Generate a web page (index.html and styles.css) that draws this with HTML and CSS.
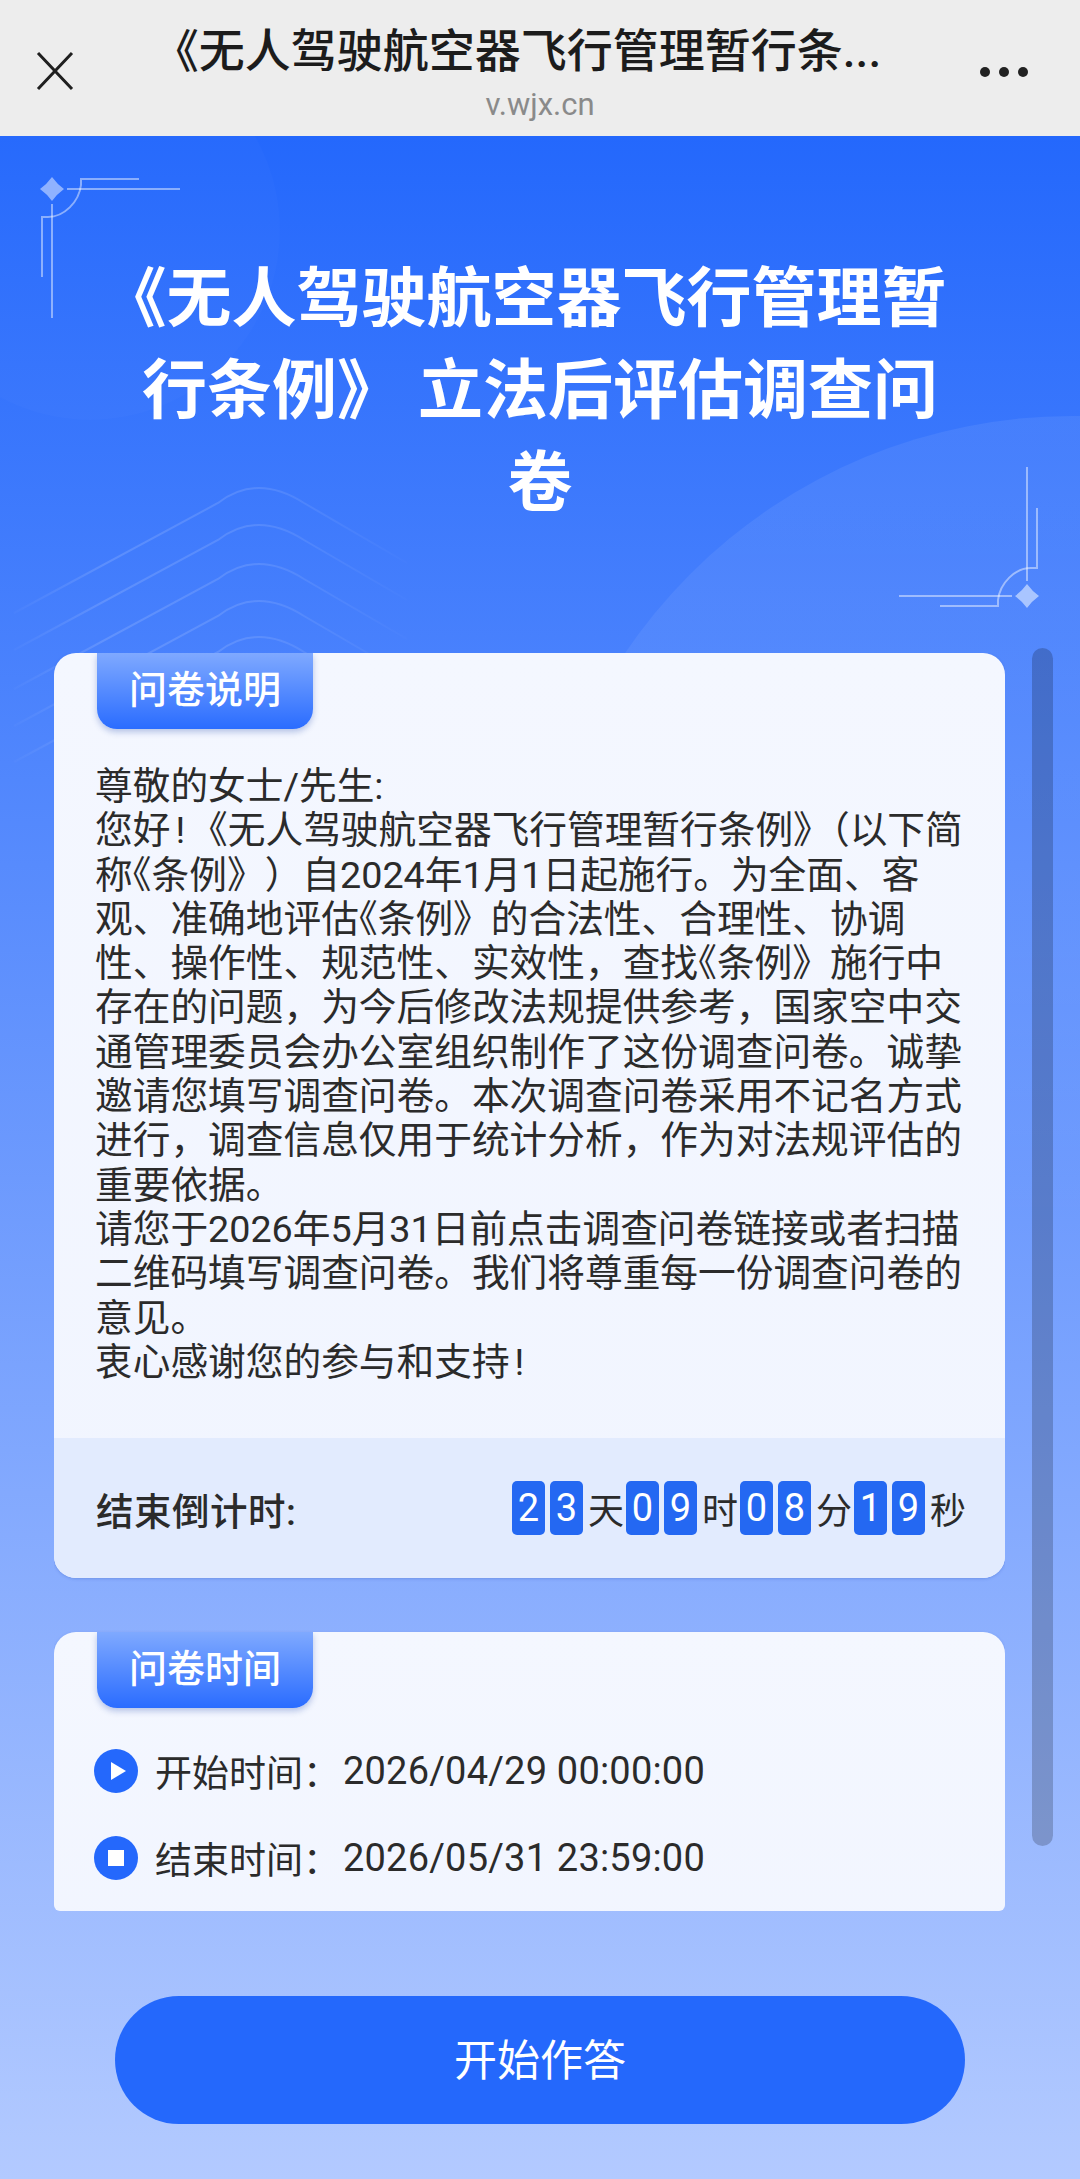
FILE: index.html
```html
<!DOCTYPE html>
<html lang="zh-CN">
<head>
    <meta charset="UTF-8">
    <meta name="viewport" content="width=device-width, initial-scale=1.0">
    <title>无人驾驶航空器飞行管理暂行条例 立法后评估调查问卷</title>
    <link rel="stylesheet" href="styles.css">
</head>
<body>
    <header class="top-bar">
        <svg class="close-icon" width="40" height="40" viewBox="0 0 40 40">
            <path d="M3 2 L37 38 M37 2 L3 38" stroke="#1f1f1f" stroke-width="3" fill="none"/>
        </svg>
        <div class="top-title">
            <div class="top-name">《无人驾驶航空器飞行管理暂行条...</div>
            <div class="top-host">v.wjx.cn</div>
        </div>
        <div class="more-dots"><span></span><span></span><span></span></div>
    </header>

    <main class="page">
        <!-- background shapes -->
        <svg class="page-bg" width="1080" height="2043" viewBox="0 136 1080 2043">
            <defs>
                <linearGradient id="ridgeFade" gradientUnits="userSpaceOnUse" x1="0" y1="0" x2="420" y2="0">
                    <stop offset="0" stop-color="#ffffff" stop-opacity="0"/>
                    <stop offset="0.25" stop-color="#ffffff" stop-opacity="0.14"/>
                    <stop offset="0.6" stop-color="#ffffff" stop-opacity="0.12"/>
                    <stop offset="1" stop-color="#ffffff" stop-opacity="0"/>
                </linearGradient>
                <linearGradient id="bubbleFade" x1="0" y1="0" x2="0" y2="1">
                    <stop offset="0" stop-color="#ffffff" stop-opacity="0.07"/>
                    <stop offset="0.5" stop-color="#ffffff" stop-opacity="0.05"/>
                    <stop offset="0.75" stop-color="#ffffff" stop-opacity="0"/>
                </linearGradient>
            </defs>
            <circle cx="90" cy="230" r="190" fill="#ffffff" opacity="0.015"/>
            <circle cx="1072" cy="956" r="540" fill="url(#bubbleFade)"/>
            <g fill="none" stroke="url(#ridgeFade)" stroke-width="2">
                <path d="M14 613 L218 503 Q257 473 304 503 L407 563"/>
                <path d="M14 650 L218 540 Q257 510 304 540 L407 600"/>
                <path d="M14 689 L218 579 Q257 549 304 579 L407 639"/>
                <path d="M14 726 L218 616 Q257 586 304 616 L407 676"/>
                <path d="M14 762 L218 652 Q257 622 304 652 L407 712"/>
            </g>
        </svg>
        <svg class="corner corner-left" width="150" height="200" viewBox="0 0 150 200">
            <path d="M22 12 Q27 19 34 24 Q27 29 22 36 Q17 29 10 24 Q17 19 22 12 Z" fill="#8fb2ff"/>
            <g fill="none" stroke="#ffffff" stroke-opacity="0.45" stroke-width="2">
                <path d="M37 24 H150"/>
                <path d="M109 14 H51 V20 C49 37 34 52 18 52 H12 V112"/>
                <path d="M22 39 V153"/>
            </g>
        </svg>
        <svg class="corner corner-right" width="150" height="200" viewBox="0 0 150 200">
            <path d="M22 12 Q27 19 34 24 Q27 29 22 36 Q17 29 10 24 Q17 19 22 12 Z" fill="#a9c5ff"/>
            <g fill="none" stroke="#ffffff" stroke-opacity="0.45" stroke-width="2">
                <path d="M37 24 H150"/>
                <path d="M109 14 H51 V20 C49 37 34 52 18 52 H12 V112"/>
                <path d="M22 39 V153"/>
            </g>
        </svg>

        <h1 class="survey-title"><span class="title-first">《无人驾驶航空器飞行管理暂</span><br>行条例》 立法后评估调查问<br>卷</h1>

        <div class="scroll-wrap">
            <div class="scroll-bar"></div>
            <div class="scroll-inner">
                <section class="card">
                    <div class="tab">问卷说明</div>
                    <div class="intro">
                        尊敬的女士/先生:<br>
                        您好<span class="bang">!</span>《无人驾驶航空器飞行管理暂行条例》（以下简<br>
                        称<span class="open-mark">《</span>条例》<span class="close-paren">）</span>自2024年1月1日起施行。为全面、客<br>
                        观、准确地评估<span class="open-mark">《</span>条例》的合法性、合理性、协调<br>
                        性、操作性、规范性、实效性，查找<span class="open-mark">《</span>条例》施行中<br>
                        存在的问题，为今后修改法规提供参考，国家空中交<br>
                        通管理委员会办公室组织制作了这份调查问卷。诚挚<br>
                        邀请您填写调查问卷。本次调查问卷采用不记名方式<br>
                        进行，调查信息仅用于统计分析，作为对法规评估的<br>
                        重要依据。<br>
                        请您于2026年5月31日前点击调查问卷链接或者扫描<br>
                        二维码填写调查问卷。我们将尊重每一份调查问卷的<br>
                        意见。<br>
                        衷心感谢您的参与和支持<span class="bang">!</span>
                    </div>
                    <div class="countdown">
                        <div class="countdown-label">结束倒计时:</div>
                        <div class="countdown-time">
                            <span class="digit">2</span><span class="digit">3</span><span class="unit">天</span>
                            <span class="digit">0</span><span class="digit">9</span><span class="unit">时</span>
                            <span class="digit">0</span><span class="digit">8</span><span class="unit">分</span>
                            <span class="digit">1</span><span class="digit">9</span><span class="unit">秒</span>
                        </div>
                    </div>
                </section>

                <section class="card card-time">
                    <div class="tab">问卷时间</div>
                    <div class="time-row">
                        <svg class="time-icon" width="44" height="44" viewBox="0 0 44 44">
                            <circle cx="22" cy="22" r="22" fill="#2468fc"/>
                            <path d="M17 13 L32 22 L17 31 Z" fill="#ffffff"/>
                        </svg>
                        <span>开始时间：</span><span class="time-value">2026/04/29 00:00:00</span>
                    </div>
                    <div class="time-row">
                        <svg class="time-icon" width="44" height="44" viewBox="0 0 44 44">
                            <circle cx="22" cy="22" r="22" fill="#2468fc"/>
                            <rect x="14" y="14" width="16" height="16" fill="#ffffff"/>
                        </svg>
                        <span>结束时间：</span><span class="time-value">2026/05/31 23:59:00</span>
                    </div>
                </section>
            </div>
        </div>

        <div class="actions">
            <button class="start-button">开始作答</button>
        </div>
    </main>
</body>
</html>
```

FILE: styles.css
```css
* {
    box-sizing: border-box;
}
html, body {
    margin: 0;
    padding: 0;
}
body {
    width: 1080px;
    height: 2179px;
    overflow: hidden;
    font-family: Roboto, "Noto Sans CJK SC", sans-serif;
    color: #2b2b2b;
    display: flex;
    flex-direction: column;
}
.top-bar {
    height: 136px;
    background-color: #ededed;
    display: flex;
    align-items: center;
    padding: 0 52px 0 35px;
    flex-shrink: 0;
}
.close-icon {
    margin-top: 5px;
    margin-right: 25px;
    flex-shrink: 0;
}
.top-title {
    flex: 1;
    min-width: 0;
    padding-top: 9px;
    text-align: center;
}
.top-name {
    font-size: 46px;
    line-height: 60px;
    font-weight: 500;
    color: #1c1c1c;
    white-space: nowrap;
    padding-right: 46px;
}
.top-host {
    font-size: 31px;
    line-height: 38px;
    margin-top: 5px;
    color: #8a8a8a;
}
.more-dots {
    display: flex;
    gap: 9px;
    margin-top: 8px;
    flex-shrink: 0;
}
.more-dots span {
    width: 10px;
    height: 10px;
    border-radius: 50%;
    background-color: #222;
}
.page {
    flex: 1;
    position: relative;
    display: flex;
    flex-direction: column;
    background: linear-gradient(180deg, #2468fc 0%, #b3caff 100%);
}
.page-bg {
    position: absolute;
    top: 0;
    left: 0;
}
.corner {
    position: absolute;
}
.corner-left {
    left: 30px;
    top: 29px;
}
.corner-right {
    left: 899px;
    top: 284px;
    transform: rotate(180deg);
}
.survey-title {
    position: relative;
    margin: 117px 0 124px;
    font-size: 65px;
    line-height: 92px;
    font-weight: 700;
    color: #fff;
    text-align: center;
}
.title-first {
    display: inline-block;
    margin-right: 32px;
}
.scroll-wrap {
    position: relative;
    margin-left: 54px;
    width: 951px;
    height: 1258px;
}
.scroll-inner {
    height: 100%;
    overflow: hidden;
    border-radius: 0 0 6px 6px;
}
.scroll-bar {
    position: absolute;
    left: 978px;
    top: -5px;
    width: 21px;
    height: 1198px;
    border-radius: 11px;
    background-color: rgba(0, 0, 0, 0.2);
}
.card {
    background: linear-gradient(180deg, #f4f7ff 0%, #f1f5ff 100%);
    border-radius: 22px;
    box-shadow: 0 1px 3px rgba(30, 70, 170, 0.25);
    overflow: hidden;
    margin-bottom: 54px;
}
.card-time {
    height: 400px;
}
.tab {
    width: 216px;
    height: 76px;
    margin-left: 43px;
    border-radius: 0 0 20px 20px;
    background: linear-gradient(180deg, #7fa9ff 0%, #2a6cff 100%);
    box-shadow: 0 3px 6px rgba(30, 70, 170, 0.3);
    color: #fff;
    font-size: 38px;
    font-weight: 500;
    line-height: 74px;
    text-align: center;
}
.intro {
    padding: 35px 30px 54px 41px;
    font-size: 37.7px;
    line-height: 44.3px;
    white-space: nowrap;
}
.bang {
    margin: 0 5px;
}
.open-mark {
    margin-left: -0.5em;
}
.close-paren {
    margin-left: 0.5em;
}
.countdown {
    height: 140px;
    background-color: #e2ebfe;
    display: flex;
    align-items: center;
    justify-content: space-between;
    padding: 0 42px;
}
.countdown-label {
    font-size: 37.5px;
    font-weight: 500;
    letter-spacing: 0.5px;
}
.countdown-time {
    display: flex;
    align-items: center;
    gap: 5px;
    font-size: 36px;
}
.digit {
    width: 33px;
    height: 54px;
    border-radius: 5px;
    background-color: #2468f2;
    color: #fff;
    font-size: 38px;
    line-height: 54px;
    text-align: center;
}
.unit {
    width: 33px;
    text-align: center;
    white-space: nowrap;
}
.time-row {
    display: flex;
    align-items: center;
    margin: 41px 0 43px 40px;
    height: 44px;
    font-size: 37px;
}
.time-icon {
    margin-right: 17px;
    flex-shrink: 0;
}
.time-value {
    margin-left: 3px;
    font-size: 38px;
    letter-spacing: 0.2px;
}
.actions {
    padding: 85px 115px 0;
}
.start-button {
    display: block;
    width: 100%;
    height: 128px;
    padding: 0 0 6px;
    border: none;
    border-radius: 64px;
    background-color: #2468fc;
    color: #fff;
    font-family: inherit;
    font-size: 43px;
}
```
